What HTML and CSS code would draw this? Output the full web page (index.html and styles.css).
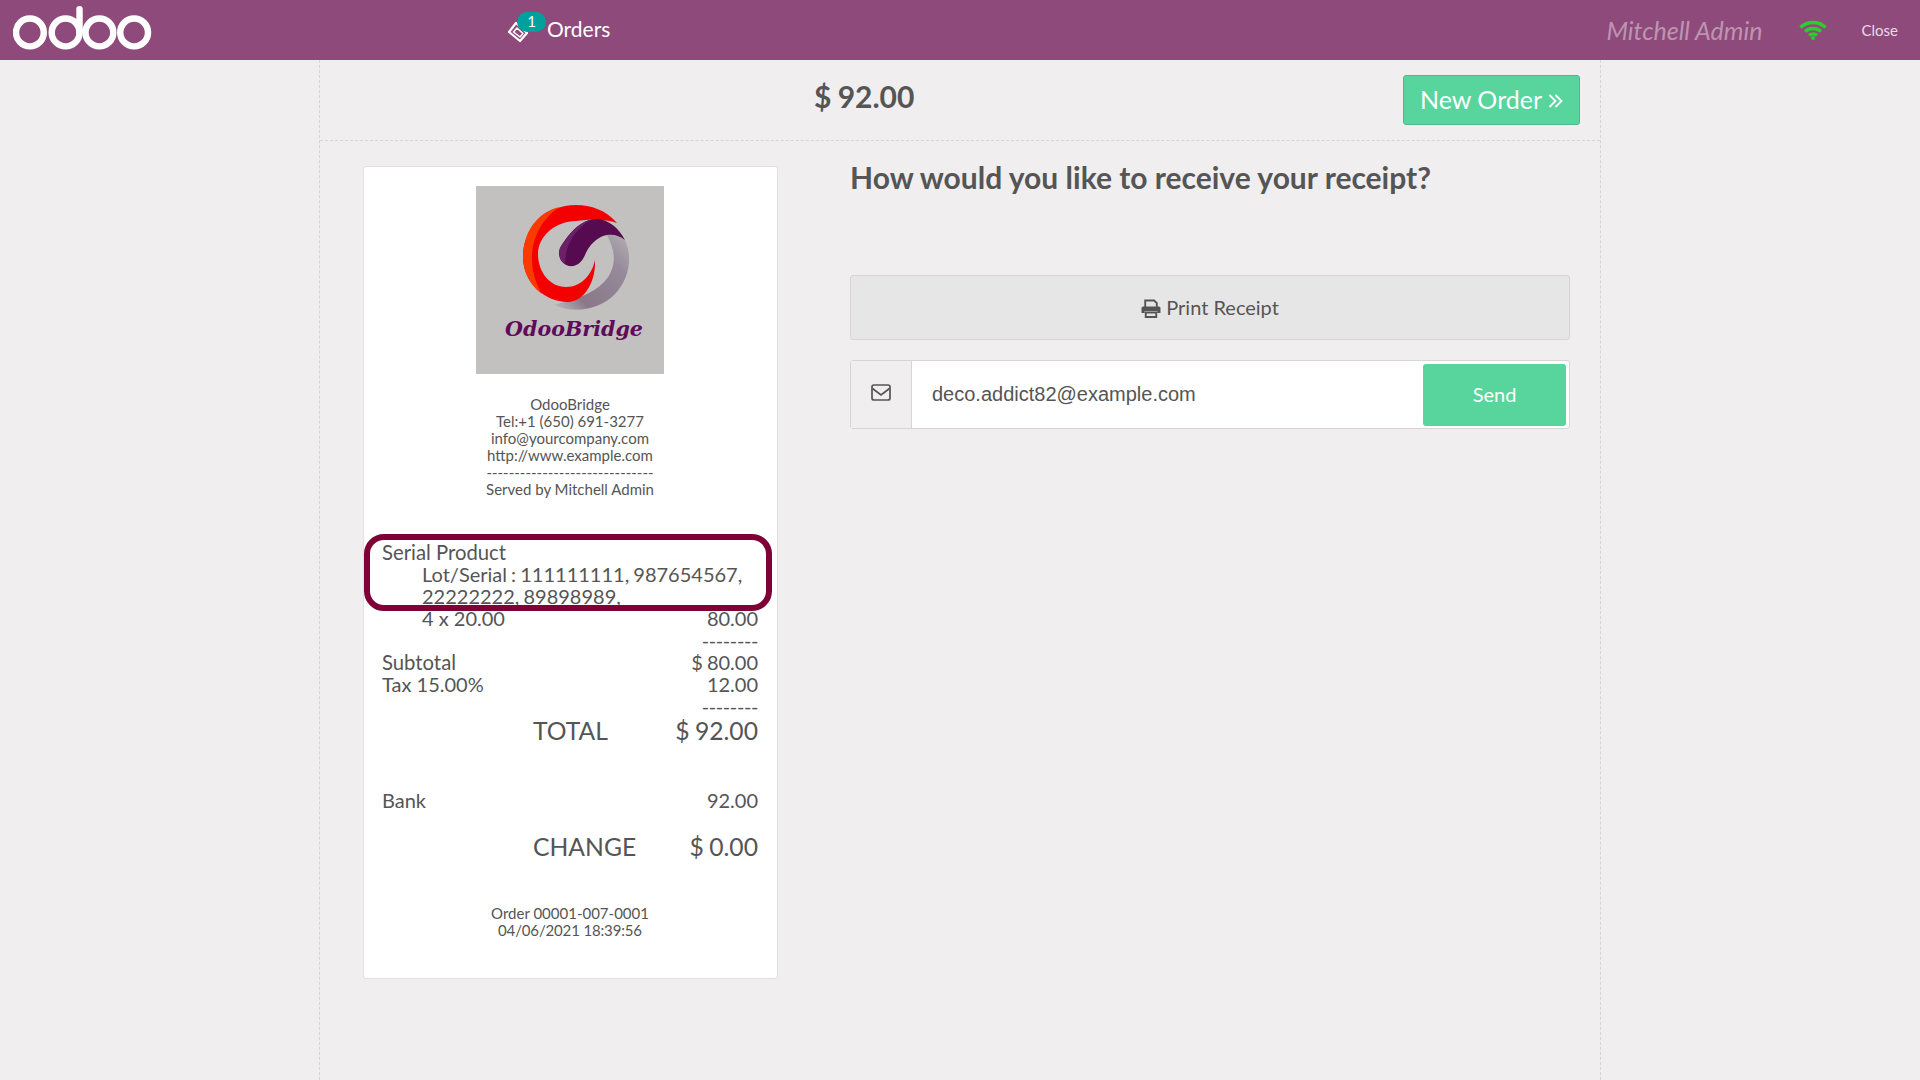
FILE: index.html
```html
<!DOCTYPE html>
<html lang="en">
<head>
  <meta charset="UTF-8" />
  <title>Point of Sale</title>
  <link rel="stylesheet" href="styles.css">
</head>
<body>

<!-- Header -->
<header class="topbar">
  <svg class="odoo-logo" width="139" height="46" viewBox="0 0 140 46" fill="none" stroke="#fff" stroke-width="6.5">
    <circle cx="17" cy="27.5" r="14"/>
    <circle cx="53" cy="27.5" r="14"/>
    <path d="M67 27.5V4" stroke-linecap="round"/>
    <circle cx="87" cy="27.5" r="14"/>
    <circle cx="122" cy="27.5" r="14"/>
  </svg>
  <div class="orders-tab">
    <svg class="ticket-icon" width="22" height="24" viewBox="0 0 22 24" fill="none" stroke="#fff" stroke-linejoin="round">
      <path d="M2 13 9 4l11 10-7 8z" stroke-width="2.200"/>
      <path d="M6.500 13 10 9l6 5.500-3 3.500z" stroke-width="1.500"/>
    </svg>
    <span class="badge">1</span>
    <span class="orders-label">Orders</span>
  </div>
  <div class="topbar-right">
    <span class="cashier">Mitchell Admin</span>
    <svg class="wifi-icon" width="28" height="20" viewBox="0 0 28 20" fill="none" stroke="#2ecc2e" stroke-width="3.400">
      <path d="M1.500 7.500C8.500 .8 19.500 .8 26.500 7.500"/>
      <path d="M6 11.500C10.500 7.500 17.500 7.500 22 11.500"/>
      <path d="M10 15.300C12.300 13.500 15.700 13.500 18 15.300"/>
      <circle cx="14" cy="18" r="2" fill="#2ecc2e" stroke="none"/>
    </svg>
    <span class="close-btn">Close</span>
  </div>
</header>

<main class="screen">
  <div class="top-content">
    <div class="top-amount">$ 92.00</div>
    <button class="next-btn">New Order
      <svg width="15" height="16" viewBox="0 0 15 16" fill="none" stroke="#fff" stroke-width="1.800">
        <path d="M1.500 2l6 6-6 6"/><path d="M7.500 2l6 6-6 6"/>
      </svg>
    </button>
  </div>

  <div class="bottom-content">
    <!-- Receipt -->
    <section class="receipt">
      <svg class="company-logo" width="188" height="188" viewBox="0 0 188 188">
        <defs>
          <linearGradient id="ringFade" x1="0" y1="1" x2="1" y2="0">
            <stop offset="0" stop-color="#c2bfc1"/>
            <stop offset="0.25" stop-color="#8a7888"/>
            <stop offset="0.7" stop-color="#96899a"/>
            <stop offset="1" stop-color="#b4b0b3"/>
          </linearGradient>
        </defs>
        <rect width="188" height="188" fill="#c2c1c0"/>
        <path d="M131 49C137 60 140 72 136 83C131 98 116 108 92 115C90 116 84 117 78 119C95 127 122 126 140 107C153 92 157 72 149 54C145 50 138 48 131 49z" fill="url(#ringFade)"/>
        <path d="M141 37C130 24 115 19 100 19C70 19 47 42 47 71C47 96 68 116 92 116C108 116 120 96 119 74C116 88 106 101 90 101C74 101 62 86 62 68C62 50 80 35 100 35C115 33 130 33 141 37z" fill="#f40000"/>
        <path d="M84 21C60 26 47 48 47 71C47 86 54 99 66 108C60 98 56 86 56 72C56 52 66 32 84 21z" fill="#fb3a00"/>
        <path d="M149 54C143 42 132 33 120 33C106 33 92 48 84 62C81 70 85 78 93 80C101 81 106 76 109 69C113 59 122 50 131 49C138 48 144 50 149 54z" fill="#560a50"/>
        <path d="M108 36C98 41 90 52 84 62C82 68 84 74 89 78C89 62 96 46 114 34C112 34 110 35 108 36z" fill="#6c2066"/>
        <text class="logo-text" x="98" y="150" text-anchor="middle">OdooBridge</text>
      </svg>
      <div class="receipt-head">
        <div>OdooBridge</div>
        <div>Tel:+1 (650) 691-3277</div>
        <div>info@yourcompany.com</div>
        <div>http://www.example.com</div>
        <div>------------------------------</div>
        <div>Served by Mitchell Admin</div>
      </div>
      <div class="lines">
        <div class="wide-label">Serial Product</div>
        <div class="indent lot">Lot/Serial : 111111111, 987654567, 22222222, 89898989,</div>
        <div class="line indent"><span>4 x 20.00</span><span>80.00</span></div>
        <div class="dashes">--------</div>
        <div class="line"><span class="wide-label">Subtotal</span><span>$ 80.00</span></div>
        <div class="line"><span>Tax 15.00%</span><span>12.00</span></div>
        <div class="dashes">--------</div>
        <div class="line big"><span>TOTAL</span><span>$ 92.00</span></div>
        <div class="line bank-row"><span>Bank</span><span>92.00</span></div>
        <div class="line big change-row"><span>CHANGE</span><span>$ 0.00</span></div>
      </div>
      <div class="receipt-foot">
        <div>Order 00001-007-0001</div>
        <div class="foot-date">04/06/2021 18:39:56</div>
      </div>
      <div class="highlight"></div>
    </section>

    <!-- Receipt options -->
    <section class="options">
      <h1>How would you like to receive your receipt?</h1>
      <button class="print-btn">
        <svg width="20" height="19" viewBox="0 0 19 19" preserveAspectRatio="none">
          <path d="M4 8V1.500h8.500L15 4v4" fill="none" stroke="#555" stroke-width="1.800"/>
          <path d="M2 7.500h15a1.500 1.500 0 0 1 1.500 1.500v5h-3v-2H3.500v2H.5V9A1.500 1.500 0 0 1 2 7.500z" fill="#555"/>
          <path d="M4.500 13.500h10V18h-10z" fill="none" stroke="#555" stroke-width="1.800"/>
        </svg>
        Print Receipt
      </button>
      <div class="email-group">
        <div class="email-icon">
          <svg width="20" height="17" viewBox="0 0 20 17" fill="none" stroke="#555" stroke-width="1.700">
            <rect x="1" y="1" width="18" height="15" rx="2"/>
            <path d="M1.500 4.500 10 11l8.500-6.500"/>
          </svg>
        </div>
        <div class="email-input">deco.addict82@example.com</div>
        <button class="send-btn">Send</button>
      </div>
    </section>
  </div>
</main>

</body>
</html>
```

FILE: styles.css
```css
* {
  box-sizing: border-box;
}

body {
  margin: 0;
  height: 1080px;
  overflow: hidden;
  font-family: Lato, sans-serif;
  color: #555;
  background: #f0eeee;
}

button {
  font-family: inherit;
}

/* Header */
.topbar {
  height: 60px;
  background: #8f4a7c;
  color: #fff;
  display: flex;
  align-items: flex-start;
  padding-left: 13px;
}

.odoo-logo {
  margin-top: 5px;
  flex-shrink: 0;
}

.orders-tab {
  position: relative;
  margin-left: 355px;
  padding-top: 15px;
  display: flex;
  align-items: center;
  gap: 18px;
}

.ticket-icon {
  margin-top: 4px;
}

.badge {
  position: absolute;
  left: 10px;
  top: 12px;
  width: 29px;
  height: 20px;
  border-radius: 10px;
  background: #00a09d;
  font-size: 15px;
  line-height: 19px;
  text-align: center;
}

.orders-label {
  font-size: 21px;
  line-height: 28px;
}

.topbar-right {
  margin-left: auto;
  display: flex;
  align-items: center;
  height: 60px;
  padding-right: 22px;
}

.cashier {
  font-size: 25px;
  font-style: italic;
  font-weight: 400;
  color: rgba(255, 255, 255, 0.42);
}

.wifi-icon {
  margin-left: 36px;
  margin-top: -1px;
}

.close-btn {
  margin-left: 35px;
  font-size: 15px;
  color: #e6dce4;
}

/* Main column */
.screen {
  width: 1282px;
  height: 1020px;
  margin-left: 319px;
  border-left: 1px dashed #d6d4d4;
  border-right: 1px dashed #d6d4d4;
}

.top-content {
  position: relative;
  height: 81px;
  border-bottom: 1px dashed #d6d4d4;
  display: flex;
  justify-content: flex-end;
  padding: 15px 20px 0 0;
}

.top-amount {
  position: absolute;
  left: 494px;
  top: 14px;
  font-size: 30px;
  font-weight: 700;
  line-height: 44px;
  word-spacing: -1px;
}

.next-btn {
  width: 177px;
  height: 50px;
  border: 1px solid #4eb98e;
  border-radius: 3px;
  background: #57d59d;
  color: #fff;
  font-size: 25px;
  padding: 0 0 2px;
}

.bottom-content {
  display: flex;
  align-items: flex-start;
  padding: 25px 30px 0 43px;
}

/* Receipt */
.receipt {
  position: relative;
  width: 415px;
  height: 813px;
  flex-shrink: 0;
  background: #fff;
  border: 1px solid #e2e0e0;
  border-radius: 3px;
  padding: 19px 19px 0 18px;
  font-size: 20px;
  line-height: 22px;
}

.company-logo {
  display: block;
  margin: 0 auto;
}

.logo-text {
  font-family: "DejaVu Serif", serif;
  font-size: 20.600px;
  font-weight: 700;
  font-style: italic;
  fill: #5f0a5a;
}

.receipt-head,
.receipt-foot {
  text-align: center;
  font-size: 15px;
  line-height: 17px;
}

.receipt-head {
  margin-top: 22px;
}

.lines {
  margin-top: 43px;
}

.wide-label {
  font-size: 20.300px;
}

.indent {
  padding-left: 40px;
}

.lot {
  word-spacing: -1px;
}

.line {
  display: flex;
  justify-content: space-between;
}

.line span:last-child {
  word-spacing: -1px;
}

.dashes {
  text-align: right;
  letter-spacing: -0.400px;
}

.big {
  font-size: 24.700px;
  line-height: 28px;
  padding-left: 151px;
}

.bank-row {
  margin-top: 44px;
}

.change-row {
  margin-top: 22px;
}

.receipt-foot {
  margin-top: 44px;
}

.foot-date {
  letter-spacing: -0.150px;
}

.highlight {
  position: absolute;
  left: 0;
  top: 367px;
  width: 408px;
  height: 77px;
  border: 6px solid #7f0036;
  border-radius: 20px;
}

/* Options */
.options {
  flex: 1;
  margin-left: 72px;
}

.options h1 {
  margin: 0;
  font-size: 30px;
  font-weight: 700;
  line-height: 22px;
  height: 109px;
  color: #555;
}

.print-btn {
  display: block;
  width: 100%;
  height: 65px;
  border: 1px solid #d6d4d4;
  border-radius: 3px;
  background: #e6e6e6;
  color: #555;
  font-size: 20px;
  padding: 0 0 2px;
}

.print-btn svg {
  vertical-align: -3px;
}

.email-group {
  display: flex;
  align-items: center;
  height: 69px;
  margin-top: 20px;
  padding-right: 3px;
  border: 1px solid #d6d4d4;
  border-radius: 3px;
  background: #fff;
}

.email-icon {
  width: 61px;
  height: 100%;
  display: flex;
  justify-content: center;
  align-items: center;
  padding-bottom: 5px;
  background: #f0eeee;
  border-right: 1px solid #d6d4d4;
}

.email-input {
  flex: 1;
  padding-left: 20px;
  font-family: "Liberation Sans", sans-serif;
  font-size: 20px;
}

.send-btn {
  width: 143px;
  height: 62px;
  border: none;
  border-radius: 3px;
  background: #57d59d;
  color: #fff;
  font-size: 20px;
  padding: 0 0 2px;
}
```
